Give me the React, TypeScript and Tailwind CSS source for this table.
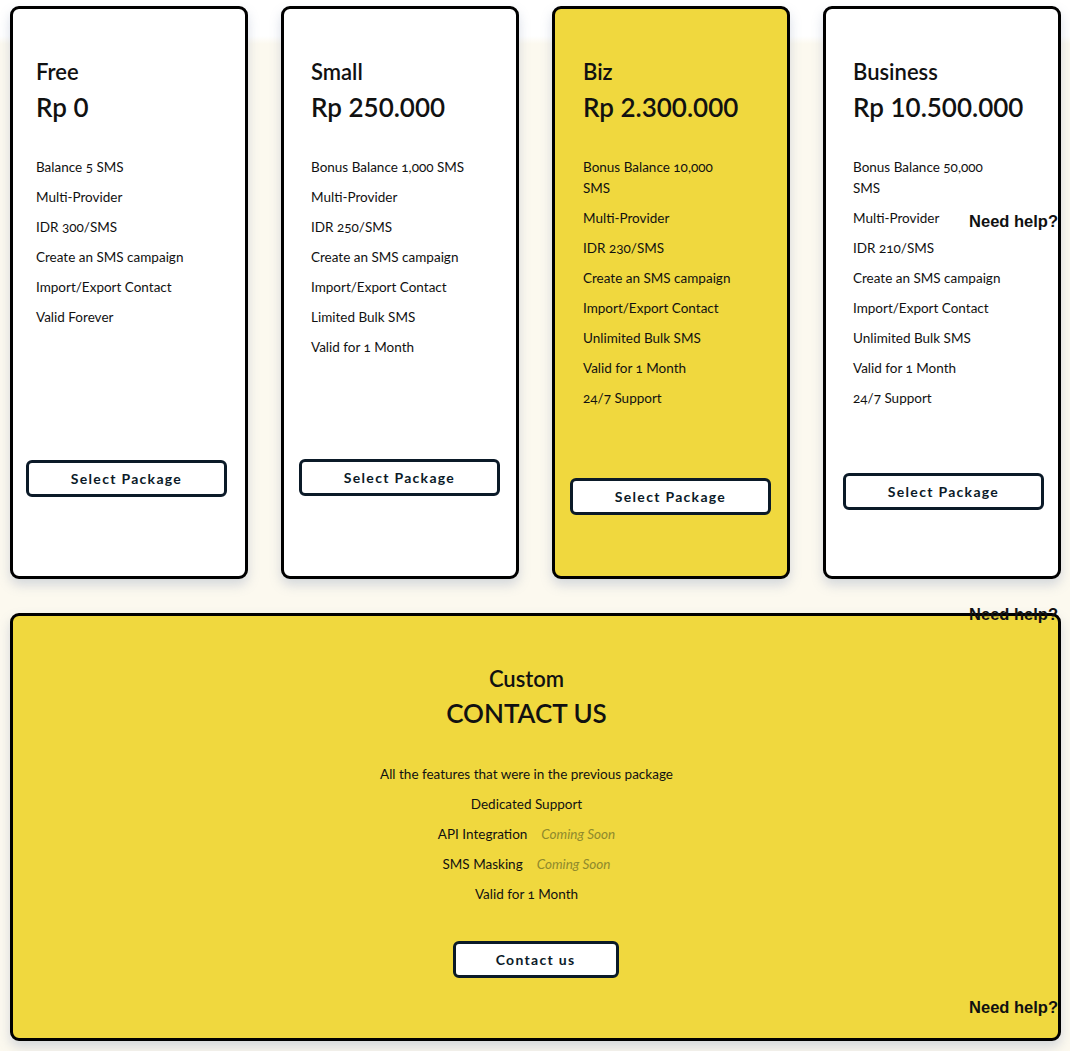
import React from "react";

type Plan = {
  name: string;
  price: string;
  features: string[];
  highlight?: boolean;
  btnMt: string;
  btnMl: string;
  padL: string;
};

const plans: Plan[] = [
  {
    name: "Free",
    price: "Rp 0",
    features: [
      "Balance 5 SMS",
      "Multi-Provider",
      "IDR 300/SMS",
      "Create an SMS campaign",
      "Import/Export Contact",
      "Valid Forever",
    ],
    btnMt: "mt-[132px]",
    btnMl: "ml-[13px]",
    padL: "pl-[23px]",
  },
  {
    name: "Small",
    price: "Rp 250.000",
    features: [
      "Bonus Balance 1,000 SMS",
      "Multi-Provider",
      "IDR 250/SMS",
      "Create an SMS campaign",
      "Import/Export Contact",
      "Limited Bulk SMS",
      "Valid for 1 Month",
    ],
    btnMt: "mt-[101px]",
    btnMl: "ml-[15px]",
    padL: "pl-[27px]",
  },
  {
    name: "Biz",
    price: "Rp 2.300.000",
    features: [
      "Bonus Balance 10,000\nSMS",
      "Multi-Provider",
      "IDR 230/SMS",
      "Create an SMS campaign",
      "Import/Export Contact",
      "Unlimited Bulk SMS",
      "Valid for 1 Month",
      "24/7 Support",
    ],
    highlight: true,
    btnMt: "mt-[69px]",
    btnMl: "ml-[15px]",
    padL: "pl-[28px]",
  },
  {
    name: "Business",
    price: "Rp 10.500.000",
    features: [
      "Bonus Balance 50,000\nSMS",
      "Multi-Provider",
      "IDR 210/SMS",
      "Create an SMS campaign",
      "Import/Export Contact",
      "Unlimited Bulk SMS",
      "Valid for 1 Month",
      "24/7 Support",
    ],
    btnMt: "mt-[64px]",
    btnMl: "ml-[17px]",
    padL: "pl-[27px]",
  },
];

const font = "font-['Lato','Noto_Sans',sans-serif]";

function Card({ p }: { p: Plan }) {
  return (
    <div
      className={`h-[573px] rounded-[9px] border-[3px] border-black shadow-[0_6px_12px_rgba(110,130,170,0.28)] ${
        p.highlight ? "bg-[#f0d83e]" : "bg-white"
      } flex flex-col pt-[49px]`}
    >
      <div className={p.padL}>
        <div className="text-[22px] leading-[28px] font-semibold text-[#111]">{p.name}</div>
        <div className="mt-[3px] text-[26px] leading-[36px] font-semibold text-[#111]">{p.price}</div>
        <ul className="mt-[32px] flex flex-col gap-[9px]">
          {p.features.map((f) => (
            <li
              key={f}
              className="text-[13.5px] leading-[21px] text-[#111] oldstyle-nums whitespace-pre-line"
            >
              {f}
            </li>
          ))}
        </ul>
      </div>
      <button
        className={`${p.btnMt} ${p.btnMl} w-[201px] h-[37px] rounded-[6px] border-[3px] border-[#0b1a28] bg-white text-[14px] font-bold tracking-[1.3px] text-[#0b1a28]`}
      >
        Select Package
      </button>
    </div>
  );
}

export default function App() {
  return (
    <div
      className={`${font} relative min-h-[1051px] w-[1070px] bg-[linear-gradient(to_bottom,#ffffff_0px,#ffffff_36px,#fcf9ef_44px,#fcf9ef_100%)] pl-[10px] pr-[9px] pt-[6px]`}
    >
      <div className="grid grid-cols-4 gap-[33px]">
        {plans.map((p) => (
          <Card key={p.name} p={p} />
        ))}
      </div>

      <div className="mt-[34px] h-[428px] rounded-[9px] border-[3px] border-black bg-[#f0d83e] shadow-[0_6px_12px_rgba(110,130,170,0.28)] flex flex-col items-center pt-[49px]">
        <div className="mr-[18px] flex flex-col items-center">
          <div className="text-[22px] leading-[28px] font-semibold text-[#111]">Custom</div>
          <div className="mt-[2px] text-[26px] leading-[36px] font-semibold text-[#111]">CONTACT US</div>
          <ul className="mt-[33px] flex flex-col items-center gap-[9px]">
            <li className="text-[13.5px] leading-[21px] text-[#111]">All the features that were in the previous package</li>
            <li className="text-[13.5px] leading-[21px] text-[#111]">Dedicated Support</li>
            <li className="text-[13.5px] leading-[21px] text-[#111] flex gap-[14px]">
              <span>API Integration</span>
              <span className="italic text-[#8f8a2c]">Coming Soon</span>
            </li>
            <li className="text-[13.5px] leading-[21px] text-[#111] flex gap-[14px]">
              <span>SMS Masking</span>
              <span className="italic text-[#8f8a2c]">Coming Soon</span>
            </li>
            <li className="text-[13.5px] leading-[21px] text-[#111] oldstyle-nums">Valid for 1 Month</li>
          </ul>
        </div>
        <button className="mt-[36px] w-[166px] h-[37px] rounded-[6px] border-[3px] border-[#0b1a28] bg-white text-[14px] font-bold tracking-[1.3px] text-[#0b1a28]">
          Contact us
        </button>
      </div>

      <div className="absolute right-[12px] top-[211px] font-['Liberation_Sans',Arial,sans-serif] text-[16.5px] leading-[20px] font-bold text-[#111]">
        Need help?
      </div>
      <div className="absolute right-[12px] top-[604px] font-['Liberation_Sans',Arial,sans-serif] text-[16.5px] leading-[20px] font-bold text-[#111]">
        Need help?
      </div>
      <div className="absolute right-[12px] top-[997px] font-['Liberation_Sans',Arial,sans-serif] text-[16.5px] leading-[20px] font-bold text-[#111]">
        Need help?
      </div>
    </div>
  );
}
